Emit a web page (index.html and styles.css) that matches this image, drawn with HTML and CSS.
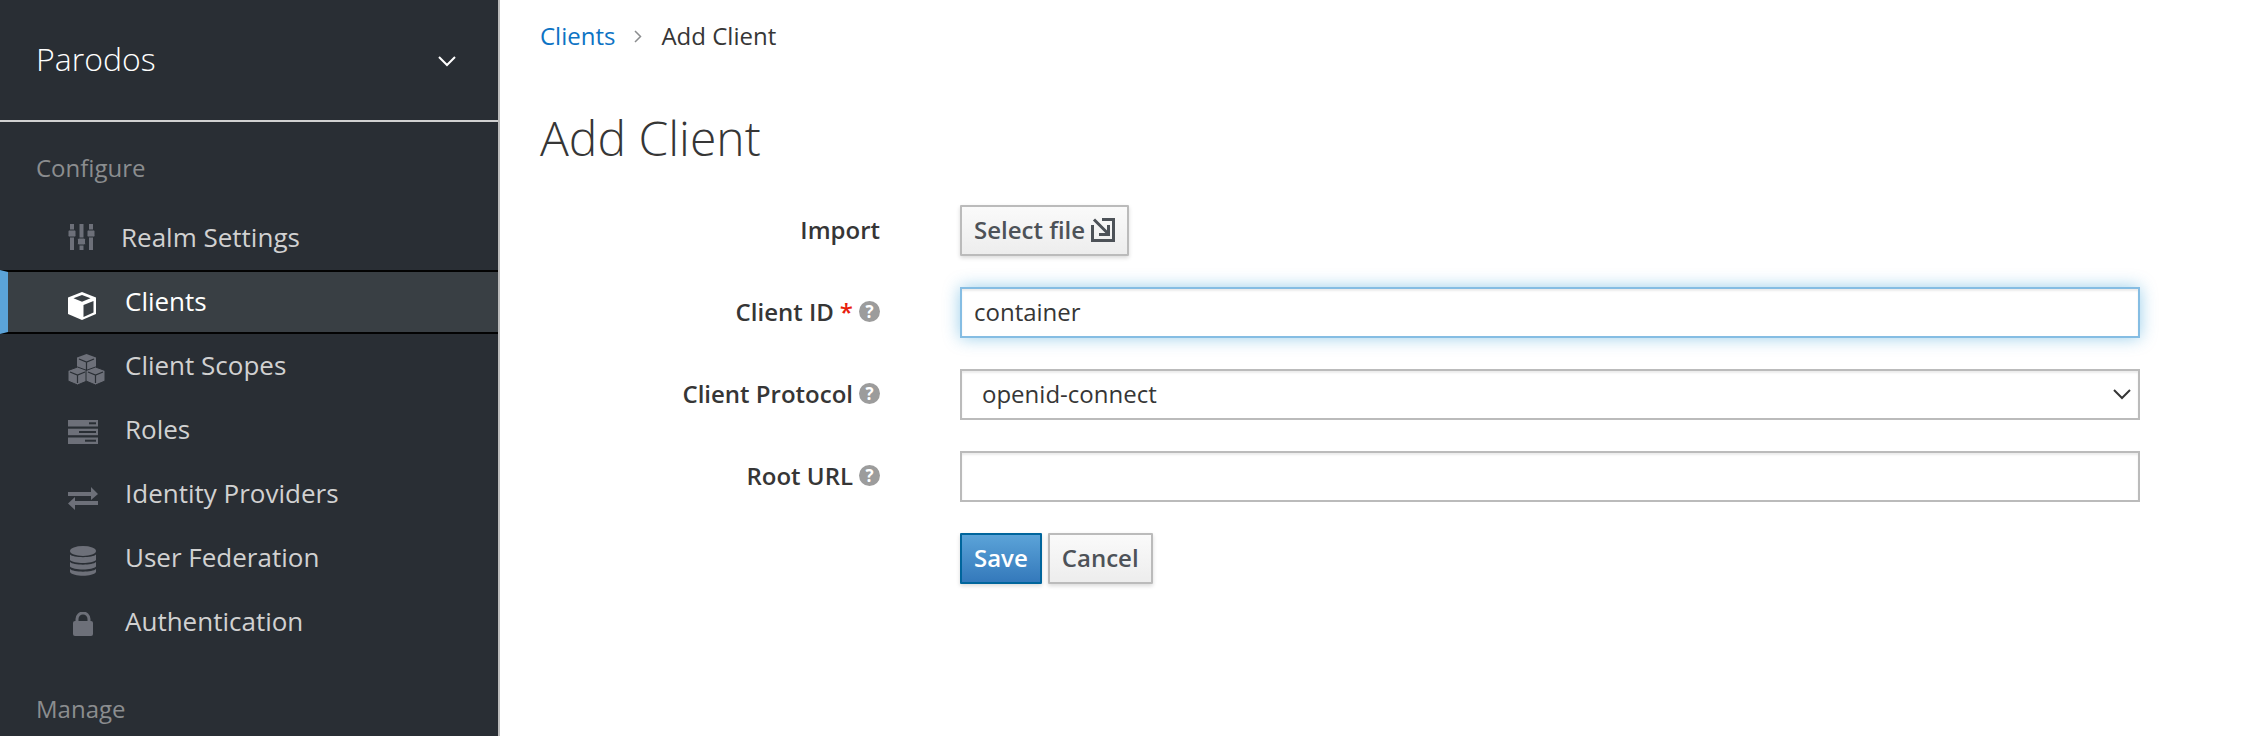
FILE: index.html

```html
<!DOCTYPE html>
<html lang="en">
<head>
  <meta charset="UTF-8" />
  <title>Add Client</title>
  <link rel="stylesheet" href="styles.css">
</head>
<body>
  <div class="app">
    <aside class="sidebar">
      <div class="realm">
        <span class="realm-name">Parodos</span>
        <svg class="realm-caret" width="18" height="11" viewBox="0 0 18 11"><path d="M1 1l8 8 8-8" fill="none" stroke="#fff" stroke-width="2"/></svg>
      </div>
      <h2 class="nav-title nav-title-first">Configure</h2>
      <ul class="nav">
        <li class="nav-item nav-item-settings">
          <span class="nav-icon">
            <svg width="27" height="26" viewBox="0 0 27 26" fill="#6d7079">
              <rect x="2" y="0" width="4" height="26"/><rect x="11.500" y="0" width="4" height="26"/><rect x="21" y="0" width="4" height="26"/>
              <rect x="0" y="6" width="8" height="7" rx="1.500" stroke="#292e34"/><rect x="9.500" y="14" width="8" height="7" rx="1.500" stroke="#292e34"/><rect x="19" y="6" width="8" height="7" rx="1.500" stroke="#292e34"/>
            </svg>
          </span>
          Realm Settings
        </li>
        <li class="nav-item nav-item-active">
          <span class="nav-icon">
            <svg class="icon-cube" width="28" height="28" viewBox="0 0 28 28">
              <path d="M14 0L28 5.500V22L14 28 0 22V5.500z" fill="#fff"/>
              <path d="M15.500 13L25.500 9V20.500L15.500 25z" fill="#393f44"/>
              <path d="M14 3L22.500 6.300 14 9.800 5.500 6.300z" fill="#393f44"/>
            </svg>
          </span>
          Clients
        </li>
        <li class="nav-item">
          <span class="nav-icon">
            <svg class="icon-cubes" width="37" height="31" viewBox="0 0 37 31" fill="#6d7079">
              <path d="M18.500 0L28 3.500V14L18.500 17.500 9 14V3.500z"/>
              <path d="M9.500 13L19 16.500V27L9.500 31 0 27V16.500z" stroke="#292e34"/>
              <path d="M27.500 13L37 16.500V27L27.500 31 18 27V16.500z" stroke="#292e34"/>
              <path d="M11 5l7.500 3 7.500-3M18.500 8v8M2 18l7.500 3 7.500-3M9.500 21v8M20 18l7.500 3 7.500-3M27.500 21v8" fill="none" stroke="#292e34" stroke-width="1.200"/>
            </svg>
          </span>
          Client Scopes
        </li>
        <li class="nav-item">
          <span class="nav-icon">
            <svg class="icon-roles" width="30" height="24" viewBox="0 0 30 24" fill="#6d7079">
              <rect width="30" height="6.500" y="0"/><rect width="30" height="6.500" y="8.700"/><rect width="30" height="6.500" y="17.500"/>
              <g fill="#292e34"><rect x="21" y="2.300" width="7" height="2"/><rect x="11" y="11" width="17" height="2"/><rect x="17" y="19.700" width="11" height="2"/></g>
            </svg>
          </span>
          Roles
        </li>
        <li class="nav-item">
          <span class="nav-icon">
            <svg class="icon-exchange" width="30" height="23" viewBox="0 0 30 23" fill="#6d7079">
              <path d="M0 5h23V0l7 7-7 6V9H0z"/><path d="M30 14H7v-4L0 16.500 7 23v-5h23z"/>
            </svg>
          </span>
          Identity Providers
        </li>
        <li class="nav-item">
          <span class="nav-icon">
            <svg class="icon-db" width="26" height="30" viewBox="0 0 26 30" fill="#6d7079">
              <ellipse cx="13" cy="5" rx="13" ry="5"/>
              <path d="M0 8.500C3 12 23 12 26 8.500V14C23 18 3 18 0 14z"/>
              <path d="M0 16.500C3 20 23 20 26 16.500V21C23 25 3 25 0 21z" transform="translate(0 -.5)"/>
              <path d="M0 23C3 26.500 23 26.500 26 23V26C23 31 3 31 0 26z"/>
            </svg>
          </span>
          User Federation
        </li>
        <li class="nav-item">
          <span class="nav-icon">
            <svg class="icon-lock" width="20" height="24" viewBox="0 0 20 24" fill="#6d7079">
              <path d="M4 10V7a6 6 0 0 1 12 0v3" fill="none" stroke="#6d7079" stroke-width="3"/>
              <rect y="9" width="20" height="15" rx="2"/>
            </svg>
          </span>
          Authentication
        </li>
      </ul>
      <h2 class="nav-title">Manage</h2>
    </aside>

    <main class="content">
      <div class="crumbs">
        <a class="crumb-link">Clients</a>
        <svg class="crumb-sep" width="8" height="13" viewBox="0 0 8 13"><path d="M1 1l5.500 5.500L1 12" fill="none" stroke="#8b8d8f" stroke-width="1.500"/></svg>
        <span>Add Client</span>
      </div>
      <h1>Add Client</h1>

      <form class="form">
        <label class="form-label">Import</label>
        <div>
          <button type="button" class="btn btn-file">Select file
            <svg width="24" height="24" viewBox="0 0 24 24" fill="none" stroke="#4d5258" stroke-width="3"><path d="M1.500 7v15.500h21V1.500H11"/><path d="M3 1.500L16.500 15M8 16.500h9.500V7"/></svg>
          </button>
        </div>

        <label class="form-label">Client ID <span class="req">*</span> <span class="help">?</span></label>
        <input class="input input-focus" type="text" value="container">

        <label class="form-label">Client Protocol <span class="help">?</span></label>
        <div class="select">
          openid-connect
          <svg width="18" height="11" viewBox="0 0 18 11"><path d="M1 1l8 8 8-8" fill="none" stroke="#363636" stroke-width="2"/></svg>
        </div>

        <label class="form-label">Root URL <span class="help">?</span></label>
        <input class="input" type="text">

        <div></div>
        <div class="actions">
          <button type="button" class="btn btn-primary">Save</button>
          <button type="button" class="btn">Cancel</button>
        </div>
      </form>
    </main>
  </div>
</body>
</html>
```

FILE: styles.css

```css
html, body {
  margin: 0;
  height: 736px;
  overflow: hidden;
  background: #fff;
}
body {
  font-family: "Open Sans", "Liberation Sans", sans-serif;
  font-size: 24px;
  color: #363636;
}
.app {
  display: flex;
  height: 736px;
}

/* sidebar */
.sidebar {
  width: 498px;
  flex-shrink: 0;
  background: #292e34;
  border-right: 2px solid #bbb;
  color: #d1d1d1;
}
.realm {
  height: 117px;
  padding: 0 42px 3px 36px;
  display: flex;
  align-items: center;
  justify-content: space-between;
  border-bottom: 2px solid #d1d1d1;
}
.realm-name {
  font-size: 32px;
  font-weight: 300;
  color: #fff;
}
.realm-caret {
  margin-top: 5px;
}
.nav-title {
  margin: 0;
  padding: 39px 0 0 36px;
  font-size: 24px;
  line-height: 32px;
  font-weight: 400;
  color: #8b8d8f;
}
.nav-title-first {
  height: 54px;
  padding-top: 30px;
}
.nav {
  list-style: none;
  margin: 0;
  padding: 0;
}
.nav-item {
  height: 64px;
  box-sizing: border-box;
  padding: 0 0 2px 68px;
  display: flex;
  align-items: center;
  font-size: 26px;
}
.nav-item-settings .nav-icon {
  width: 53px;
}
.nav-item-active {
  color: #fff;
  background: #393f44;
  border-top: 2px solid #030303;
  border-bottom: 2px solid #030303;
  border-left: 8px solid #5ba3d8;
  padding-left: 60px;
}
.nav-icon {
  width: 57px;
  flex-shrink: 0;
  display: flex;
  align-items: center;
}
.icon-cube {
  margin-top: 10px;
}
.icon-cubes {
  margin-top: 9px;
}
.icon-roles {
  margin-top: 6px;
}
.icon-exchange {
  margin-top: 10px;
}
.icon-db {
  margin: 8px 0 0 2px;
}
.icon-lock {
  margin: 6px 0 0 5px;
}

/* main */
.content {
  flex: 1;
  padding: 0 104px 0 40px;
}
.crumbs {
  height: 70px;
  display: flex;
  align-items: center;
  gap: 19px;
}
.crumb-link {
  color: #0d73c4;
}
.crumb-sep {
  margin-top: 2px;
}
h1 {
  margin: 0;
  height: 135px;
  padding-top: 33px;
  box-sizing: border-box;
  font-size: 48px;
  line-height: 70px;
  font-weight: 300;
  color: #363636;
}
.form {
  display: grid;
  grid-template-columns: 340px 1180px;
  column-gap: 80px;
  row-gap: 31px;
  align-items: center;
}
.form-label {
  text-align: right;
  font-weight: 600;
  display: flex;
  justify-content: flex-end;
  align-items: center;
  gap: 6px;
  padding-bottom: 2px;
}
.req {
  color: #e8200c;
}
.help {
  width: 21px;
  height: 21px;
  border-radius: 50%;
  background: #9c9c9c;
  color: #fff;
  font-size: 17px;
  line-height: 21px;
  font-weight: 700;
  text-align: center;
}
.input, .select {
  width: 100%;
  height: 51px;
  box-sizing: border-box;
  border: 2px solid #bbb;
  background: #fff;
  font: inherit;
  color: #363636;
  box-shadow: inset 0 2px 2px rgba(3,3,3,.08);
}
.input {
  padding: 0 12px 2px;
  outline: none;
}
.input-focus {
  border-color: #85bde3;
  box-shadow: inset 0 2px 2px rgba(3,3,3,.08), 0 0 16px rgba(0,136,206,.4);
}
.select {
  padding: 0 7px 2px 20px;
  display: flex;
  align-items: center;
  justify-content: space-between;
}
.select svg {
  margin-top: 2px;
}
.btn {
  height: 51px;
  padding: 0 12px 2px;
  display: inline-flex;
  align-items: center;
  gap: 6px;
  box-sizing: border-box;
  border: 2px solid #bbb;
  border-radius: 1px;
  background: linear-gradient(#fafafa, #ededed);
  box-shadow: 0 2px 4px rgba(3,3,3,.15);
  font: inherit;
  font-weight: 600;
  color: #4d5258;
}
.btn-primary {
  border-color: #00659c;
  background: linear-gradient(#5ba3d8, #3479bb);
  color: #fff;
}
.actions {
  display: flex;
  gap: 6px;
}
```
